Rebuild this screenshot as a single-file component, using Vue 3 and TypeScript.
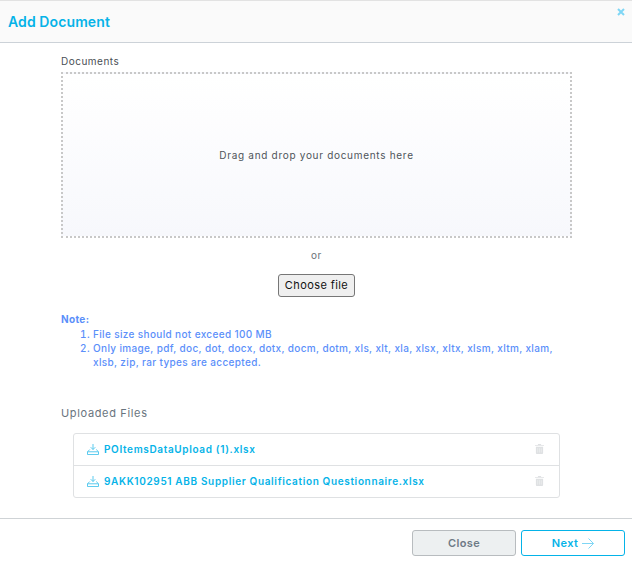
<script setup lang="ts">
const rules: string[] = [
  'File size should not exceed 100 MB',
  'Only image, pdf, doc, dot, docx, dotx, docm, dotm, xls, xlt, xla, xlsx, xltx, xlsm, xltm, xlam, xlsb, zip, rar types are accepted.',
]
const files: string[] = ['POItemsDataUpload (1).xlsx', '9AKK102951 ABB Supplier Qualification Questionnaire.xlsx']
</script>

<template>
  <div class="modal">
    <header class="head">
      <h1>Add Document</h1>
      <svg class="x" width="8" height="8" viewBox="0 0 8 8"><path d="M1 1l6 6M7 1l-6 6" stroke="#7fd6f5" stroke-width="2" fill="none" /></svg>
    </header>
    <main class="body">
      <div class="narrow">
        <label class="lbl">Documents</label>
        <div class="drop">Drag and drop your documents here</div>
        <div class="or">or</div>
        <div class="choose"><button type="button" class="file">Choose file</button></div>
        <div class="note">
          <strong>Note:</strong>
          <ol>
            <li v-for="r in rules" :key="r">{{ r }}</li>
          </ol>
        </div>
        <h2>Uploaded Files</h2>
        <ul class="list">
          <li v-for="f in files" :key="f">
            <svg width="12" height="11" viewBox="0 0 13 12" fill="none" stroke="#4cc5ec" stroke-width="1">
              <path d="M6.500 0v6M4 3.500l2.500 2.500L9 3.500" />
              <path d="M3 6L.5 8.500v3h12v-3L10 6M.5 8.500h12" />
            </svg>
            <a>{{ f }}</a>
            <svg class="trash" width="9" height="10" viewBox="0 0 10 11" fill="#dfe1e3">
              <path d="M3.500 0h3l.5 1h3v1H0V1h3zM1 3h8v7a1 1 0 0 1-1 1H2a1 1 0 0 1-1-1z" />
              <path d="M3 4.500v5M5 4.500v5M7 4.500v5" stroke="#f2f3f4" stroke-width=".6" />
            </svg>
          </li>
        </ul>
      </div>
    </main>
    <footer class="foot">
      <button type="button" class="btn close">Close</button>
      <button type="button" class="btn next">Next
        <svg width="12" height="11" viewBox="0 0 12 11" fill="none" stroke="#7fd6f5" stroke-width="1"><path d="M0 5.500h11.500M6.500 .5l5 5-5 5" /></svg>
      </button>
    </footer>
  </div>
</template>

<style>
body { background: #fff; }
</style>

<style scoped>
.modal {
  width: 632px;
  height: 565px;
  display: flex;
  flex-direction: column;
  box-sizing: border-box;
  font-family: Inter, "Liberation Sans", Arial, sans-serif;
  font-size: 10px;
  letter-spacing: 0.5px;
  overflow: hidden;
}
.head {
  height: 43px;
  box-sizing: border-box;
  border-top: 1px solid #e2e2e2;
  border-bottom: 1px solid #ccd2d8;
  background: #fafafa;
  display: flex;
  justify-content: space-between;
  padding: 0 7px 0 8px;
  flex: none;
}
h1 {
  margin: 12px 0 0;
  font-size: 14px;
  line-height: 17px;
  font-weight: 600;
  color: #05b3e8;
  letter-spacing: 0.1px;
}
.x { margin-top: 7px; }
.body { flex: 1; }
.narrow { width: 511px; margin-left: 61px; }
.lbl { display: block; margin-top: 12px; height: 17px; line-height: 13px; color: #4a4f55; }
.drop {
  height: 166px;
  box-sizing: border-box;
  border: 2px dotted #c8c8c8;
  background: linear-gradient(#fff, #f7f8fc);
  display: flex;
  align-items: center;
  justify-content: center;
  color: #4e545a;
  letter-spacing: 0.7px;
}
.or { text-align: center; margin-top: 11px; line-height: 13px; color: #6b7278; }
.choose { text-align: center; margin-top: 12px; }
.file {
  width: 77px;
  height: 23px;
  padding: 0 0 1px;
  box-sizing: border-box;
  border: 1px solid #767676;
  border-radius: 3px;
  background: #efefef;
  font: inherit;
  font-size: 11px;
  letter-spacing: 0.4px;
  color: #111;
}
.note { margin-top: 16px; color: #5b8ffa; line-height: 14px; font-weight: 500; letter-spacing: 0.35px; }
.note strong { display: block; line-height: 13px; font-weight: 700; }
ol { margin: 1px 0 0; padding: 0 0 0 32px; }
ol li { line-height: 14px; }
h2 {
  margin: 37px 0 0;
  font-size: 11px;
  line-height: 14px;
  font-weight: 400;
  color: #69747e;
  letter-spacing: 0.65px;
}
.list {
  list-style: none;
  margin: 13px 12px 0;
  padding: 0;
  border: 1px solid #dfe1e3;
  border-radius: 3px;
}
.list li {
  height: 31px;
  box-sizing: border-box;
  display: flex;
  align-items: center;
  padding: 0 15px 1px 13px;
  gap: 5px;
}
.list li + li { border-top: 1px solid #dfe1e3; height: 32px; }
.list a { color: #05b3e8; font-weight: 600; flex: 1; letter-spacing: 0.65px; }
.foot {
  flex: none;
  height: 47px;
  box-sizing: border-box;
  border-top: 1px solid #cfd3d6;
  display: flex;
  justify-content: flex-end;
  gap: 5px;
  padding: 11px 7px 0 0;
}
.btn {
  width: 104px;
  height: 26px;
  box-sizing: border-box;
  border-radius: 3px;
  font: inherit;
  font-size: 11px;
  font-weight: 600;
  letter-spacing: 0.4px;
  padding: 0;
}
.close { background: #edf0f1; border: 1px solid #b8bcbf; color: #6d7a86; }
.next { background: #fff; border: 1px solid #05b3e8; color: #05b3e8; display: flex; align-items: center; justify-content: center; gap: 4px; }
</style>
